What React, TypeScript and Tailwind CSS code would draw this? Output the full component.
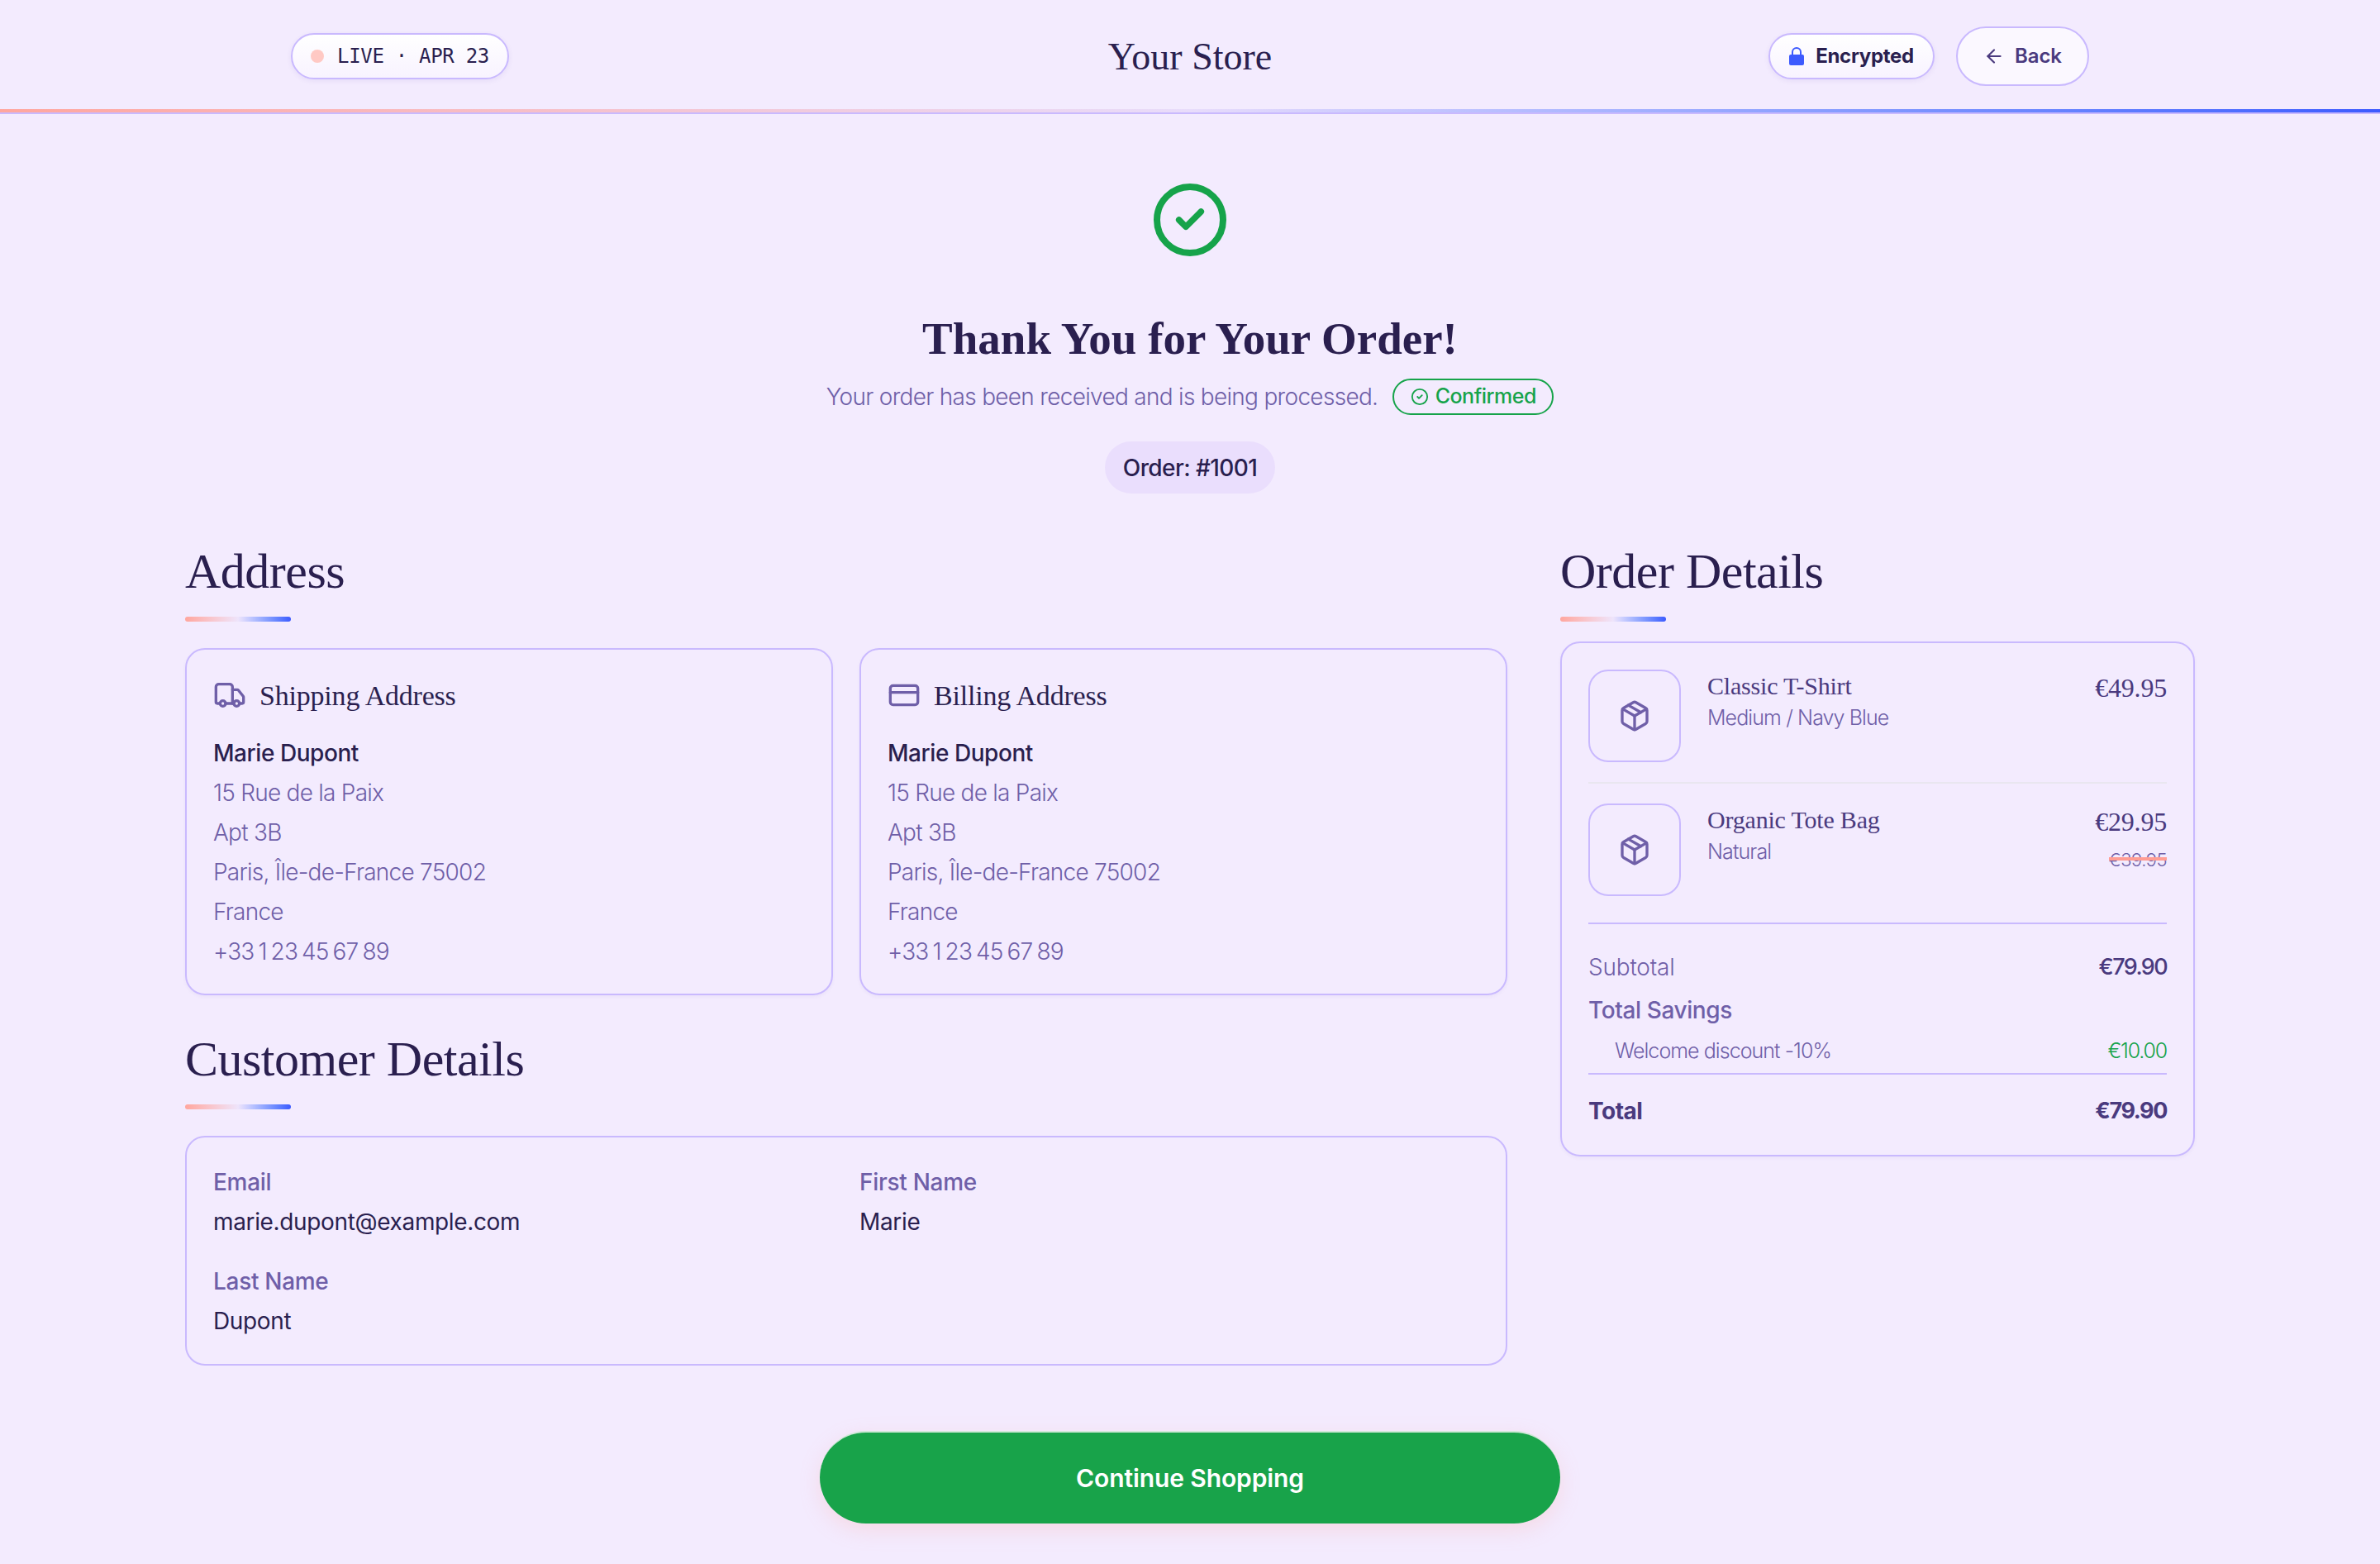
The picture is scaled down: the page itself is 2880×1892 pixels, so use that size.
import React from "react";
import { ArrowLeft, Check, CircleCheck, CreditCard, Package, Truck } from "lucide-react";

const serif = "font-['Liberation_Serif',serif]";

const addressLines = [
  "15 Rue de la Paix",
  "Apt 3B",
  "Paris, Île-de-France 75002",
  "France",
];

const SectionTitle = ({ title }: { title: string }) => (
  <div>
    <h2 className={`${serif} text-[60px] leading-[72px] text-[#2a1f4f] tracking-[-0.5px]`}>{title}</h2>
    <div className="mt-[19px] h-[6px] w-[128px] rounded-full bg-gradient-to-r from-[#ffa69e] via-[#eee4fb] to-[#3d5afe]" />
  </div>
);

const AddressCard = ({ title, icon }: { title: string; icon: React.ReactNode }) => (
  <div className="flex-1 h-[420px] rounded-[24px] border-2 border-[#c9b9fe] px-[32px] pt-[27px] shadow-[0_2px_4px_rgba(80,50,160,0.05)]">
    <div className="flex items-center gap-[16px] h-[56px]">
      {icon}
      <h3 className={`${serif} text-[34px] tracking-[-0.2px] text-[#2a1f4f]`}>{title}</h3>
    </div>
    <p className="mt-[18px] text-[28px] leading-[48px] font-medium tracking-[-0.45px] text-[#2a1f4f]">Marie Dupont</p>
    {addressLines.map((line) => (
      <p key={line} className="text-[28px] leading-[48px] font-light tracking-[-0.75px] text-[#6f5fa8]">
        {line}
      </p>
    ))}
    <p className="text-[28px] leading-[48px] font-light tracking-[-0.85px] [word-spacing:-2px] text-[#6f5fa8]">+33 1 23 45 67 89</p>
  </div>
);

const Field = ({ label, value }: { label: string; value: string }) => (
  <div>
    <p className="text-[28px] leading-[48px] font-medium tracking-[-0.3px] text-[#6f5fa8]">{label}</p>
    <p className="text-[28px] leading-[48px] tracking-[-0.35px] text-[#2a1f4f]">{value}</p>
  </div>
);

const OrderItem = ({
  name,
  variant,
  price,
  oldPrice,
}: {
  name: string;
  variant: string;
  price: string;
  oldPrice?: string;
}) => (
  <div className="flex">
    <div className="flex items-center justify-center w-[112px] h-[112px] rounded-[24px] border-2 border-[#c9b9fe]">
      <Package size={40} strokeWidth={2} className="text-[#6f5fa8]" />
    </div>
    <div className="ml-[32px] flex-1">
      <p className={`${serif} text-[30px] leading-[40px] tracking-[-0.2px] text-[#4a3a7e]`}>{name}</p>
      <p className="text-[25px] leading-[36px] font-light tracking-[-0.9px] text-[#6f5fa8]">{variant}</p>
    </div>
    <div className="text-right">
      <p className={`${serif} pt-[2px] text-[32px] leading-[40px] tracking-[-0.2px] text-[#4a3a7e]`}>{price}</p>
      {oldPrice && (
        <p className="relative ml-auto mt-[10px] w-fit text-[22px] leading-[32px] font-light tracking-[-0.5px] text-[#6f5fa8]">
          {oldPrice}
          <span className="absolute left-[0px] right-[0px] top-[13px] h-[4px] bg-[#ff9d94]" />
        </p>
      )}
    </div>
  </div>
);

export default function App() {
  return (
    <div className="min-h-screen bg-[#f3ebfe] font-['Inter',sans-serif]">
      <header className="h-[132px] pt-[4px]">
        <div className="mx-auto grid h-full w-[2176px] grid-cols-3 items-center">
          <div>
            <div className="inline-flex h-[56px] w-[264px] items-center gap-[16px] rounded-full border-2 border-[#c9b9fe] bg-gradient-to-b from-white to-[#f8f3ff] pl-[22px] shadow-[0_2px_6px_rgba(80,50,160,0.08)]">
              <span className="h-[16px] w-[16px] rounded-full bg-[#ffc9c4]" />
              <span className="font-['DejaVu_Sans_Mono',monospace] text-[24px] tracking-[-0.3px] text-[#2a1f4f]">LIVE · APR 23</span>
            </div>
          </div>
          <h1 className={`${serif} text-center text-[46px] text-[#2a1f4f]`}>Your Store</h1>
          <div className="flex items-center justify-end gap-[26px]">
            <div className="flex h-[56px] w-[201px] items-center justify-center gap-[14px] rounded-full border-2 border-[#c9b9fe] bg-gradient-to-b from-white to-[#f8f3ff] shadow-[0_2px_6px_rgba(80,50,160,0.08)]">
              <svg width="18" height="22" viewBox="0 0 18 22" className="text-[#3d5afe]">
                <path d="M4 10V6a5 5 0 0 1 10 0v4" fill="none" stroke="currentColor" strokeWidth="2" />
                <rect x="0" y="9" width="18" height="13" rx="2" fill="currentColor" />
              </svg>
              <span className="text-[24px] font-bold tracking-[-0.3px] text-[#2a1f4f]">Encrypted</span>
            </div>
            <button className="flex h-[72px] w-[161px] items-center justify-center gap-[12px] rounded-full border-2 border-[#c9b9fe] bg-[#fbf8ff]">
              <ArrowLeft size={26} strokeWidth={2} className="text-[#4a3a7e]" />
              <span className="text-[24px] font-semibold tracking-[-0.1px] text-[#4a3a7e]">Back</span>
            </button>
          </div>
        </div>
      </header>
      <div className="h-[4px] bg-gradient-to-r from-[#ffa69e] via-[#e8dcfb] to-[#3d5afe]" />
      <div className="h-[2px] bg-[#c9b9fe]" />

      <main className="mx-auto w-[2432px]">
        <div className="flex flex-col items-center pt-[84px]">
          <div className="flex h-[88px] w-[88px] items-center justify-center rounded-full border-[8px] border-[#16a34a]">
            <Check size={40} strokeWidth={4.5} className="text-[#16a34a]" />
          </div>
          <h2 className={`${serif} mt-[64px] text-[55px] leading-[72px] font-bold text-[#2a1f4f]`}>Thank You for Your Order!</h2>
          <div className="mt-[12px] flex items-center gap-[18px]">
            <p className="text-[28px] font-light tracking-[-0.7px] text-[#6f5fa8]">Your order has been received and is being processed.</p>
            <span className="flex h-[44px] w-[195px] items-center justify-center gap-[8px] rounded-full border-2 border-[#16a34a] text-[25px] font-medium tracking-[-0.5px] text-[#16a34a]">
              <CircleCheck size={22} strokeWidth={2} />
              Confirmed
            </span>
          </div>
          <div className="mt-[32px] flex h-[63px] w-[206px] items-center justify-center rounded-full bg-[#eadefd] text-[28px] font-medium tracking-[-0.6px] text-[#2a1f4f]">
            Order: #1001
          </div>
        </div>

        <div className="mt-[58px] flex gap-[64px]">
          <div className="flex-1">
            <SectionTitle title="Address" />
            <div className="mt-[32px] flex gap-[32px]">
              <AddressCard title="Shipping Address" icon={<Truck size={40} strokeWidth={2} className="text-[#6f5fa8]" />} />
              <AddressCard title="Billing Address" icon={<CreditCard size={40} strokeWidth={2} className="text-[#6f5fa8]" />} />
            </div>
            <div className="mt-[41px]">
              <SectionTitle title="Customer Details" />
            </div>
            <div className="mt-[32px] h-[278px] rounded-[24px] border-2 border-[#c9b9fe] px-[32px] pt-[30px]">
              <div className="grid grid-cols-2 gap-x-[32px] gap-y-[24px]">
                <Field label="Email" value="marie.dupont@example.com" />
                <Field label="First Name" value="Marie" />
                <Field label="Last Name" value="Dupont" />
              </div>
            </div>
          </div>

          <div className="w-[768px]">
            <SectionTitle title="Order Details" />
            <div className="mt-[24px] rounded-[24px] border-2 border-[#c9b9fe] px-[32px] pt-[32px] pb-[33px] shadow-[0_2px_4px_rgba(80,50,160,0.05)]">
              <OrderItem name="Classic T-Shirt" variant="Medium / Navy Blue" price="€49.95" />
              <div className="my-[24px] h-[2px] bg-[#e9e6f0]" />
              <OrderItem name="Organic Tote Bag" variant="Natural" price="€29.95" oldPrice="€39.95" />
              <div className="mt-[32px] h-[2px] bg-[#c9b9fe]" />
              <div className="mt-[32px] flex items-center justify-between h-[40px]">
                <span className="text-[28px] font-light tracking-[-0.2px] text-[#6f5fa8]">Subtotal</span>
                <span className="text-[27px] font-medium tracking-[-1.6px] text-[#4a3a7e]">€79.90</span>
              </div>
              <p className="mt-[12px] text-[28px] leading-[40px] font-medium tracking-[-0.4px] text-[#6f5fa8]">Total Savings</p>
              <div className="mt-[12px] flex items-center justify-between pl-[32px] h-[36px]">
                <span className="text-[25px] font-light tracking-[-0.95px] text-[#6f5fa8]">Welcome discount -10%</span>
                <span className="text-[25px] font-light tracking-[-1.2px] text-[#16a34a]">€10.00</span>
              </div>
              <div className="mt-[8px] h-[2px] bg-[#c9b9fe]" />
              <div className="mt-[24px] flex items-center justify-between h-[40px] font-bold text-[#4a3a7e]">
                <span className="text-[28px] tracking-[-0.5px]">Total</span>
                <span className="text-[27px] tracking-[-1.4px]">€79.90</span>
              </div>
            </div>
          </div>
        </div>

        <div className="mt-[79px] flex justify-center pb-[48px]">
          <button className="h-[112px] w-[896px] rounded-full border-t-2 border-[#cfe8d8] bg-[#18a34a] text-[30px] font-semibold tracking-[-0.1px] text-white shadow-[0_8px_24px_rgba(255,166,158,0.25)]">
            Continue Shopping
          </button>
        </div>
      </main>
    </div>
  );
}
